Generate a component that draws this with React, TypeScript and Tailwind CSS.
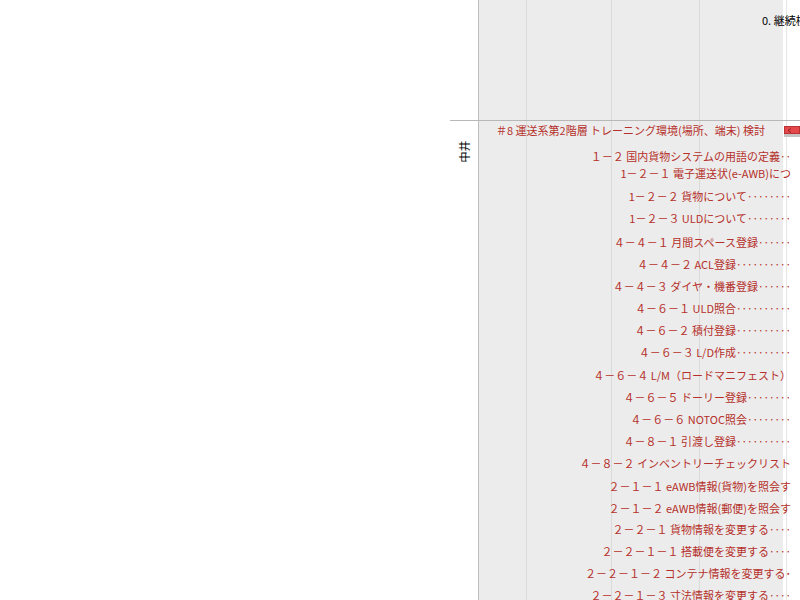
import React from 'react'

type Row = { label: string; gap: string }

const rows: Row[] = [
  { label: '１－２ 国内貨物システムの用語の定義‥', gap: 'mt-[12px]' },
  { label: '1－２－１ 電子運送状(e-AWB)につ', gap: 'mt-[3px]' },
  { label: '1－２－２ 貨物について‥‥‥‥', gap: 'mt-[9px]' },
  { label: '1－２－３ ULDについて‥‥‥‥', gap: 'mt-[8px]' },
  { label: '４－４－１ 月間スペース登録‥‥‥', gap: 'mt-[10px]' },
  { label: '４－４－２ ACL登録‥‥‥‥‥', gap: 'mt-[8px]' },
  { label: '４－４－３ ダイヤ・機番登録‥‥‥', gap: 'mt-[8px]' },
  { label: '４－６－１ ULD照合‥‥‥‥‥', gap: 'mt-[8px]' },
  { label: '４－６－２ 積付登録‥‥‥‥‥', gap: 'mt-[8px]' },
  { label: '４－６－３ L/D作成‥‥‥‥‥', gap: 'mt-[8px]' },
  { label: '４－６－４ L/M（ロードマニフェスト）', gap: 'mt-[9px]' },
  { label: '４－６－５ ドーリー登録‥‥‥‥', gap: 'mt-[8px]' },
  { label: '４－６－６ NOTOC照会‥‥‥‥', gap: 'mt-[8px]' },
  { label: '４－８－１ 引渡し登録‥‥‥‥‥', gap: 'mt-[8px]' },
  { label: '４－８－２ インベントリーチェックリスト', gap: 'mt-[8px]' },
  { label: '２－１－１ eAWB情報(貨物)を照会す', gap: 'mt-[9px]' },
  { label: '２－１－２ eAWB情報(郵便)を照会す', gap: 'mt-[8px]' },
  { label: '２－２－１ 貨物情報を変更する‥‥', gap: 'mt-[7px]' },
  { label: '２－２－１－１ 搭載便を変更する‥‥', gap: 'mt-[8px]' },
  { label: '２－２－１－２ コンテナ情報を変更する･', gap: 'mt-[8px]' },
  { label: '２－２－１－３ 寸法情報を変更する‥‥', gap: 'mt-[8px]' },
]

export default function App() {
  return (
    <div className="w-[800px] h-[600px] overflow-hidden bg-white flex font-['Noto_Sans_CJK_JP',sans-serif] text-[11px]">
      <div className="w-[450px] shrink-0" />
      <div className="w-[350px] shrink-0 relative flex flex-col">
        {/* chart backdrop */}
        <div className="absolute inset-y-0 left-[28px] right-0 flex">
          <div className="w-[49px] bg-[#ececec] border-l border-r border-[#bcbcbc] border-r-[#dadada]" />
          <div className="w-[85px] bg-[#ececec] border-r border-[#dadada]" />
          <div className="w-[88px] bg-[#ececec] border-r border-[#dadada]" />
          <div className="w-[83px] bg-[#ececec]" />
          <div className="w-[4px] border-r border-[#e6e6e6]" />
          <div className="flex-1" />
        </div>

        <div className="relative h-[121px] shrink-0 border-b border-[#b8b8b8]">
          <div className="pl-[312px] pt-[12px] text-black whitespace-nowrap">0. 継続検討事項</div>
        </div>

        <div className="relative flex flex-1 min-h-0">
          <div className="w-[28px] shrink-0 flex justify-center pt-[25px]">
            <span className="inline-block -rotate-90 text-black leading-none h-[11px] whitespace-nowrap">中井</span>
          </div>
          <div className="flex-1 flex flex-col text-[#b5302a] overflow-hidden">
            <div className="mt-[2px] h-[14px] leading-[14px] flex justify-end items-center whitespace-nowrap">
              <span>＃8 運送系第2階層 トレーニング環境(場所、端末) 検討</span>
              <div className="ml-[19px] w-[16px] shrink-0 h-[8px] bg-[#e6474a] border border-[#b83234] shadow-[0_3px_0_#c4c4c4] flex items-center pl-[2px]">
                <svg width="5" height="5" viewBox="0 0 5 5">
                  <path d="M4 0.5 L1 2.5 L4 4.5" stroke="#7a1a1a" strokeWidth="0.8" fill="none" />
                </svg>
              </div>
            </div>
            {rows.map((r, i) => (
              <div
                key={i}
                className={`${r.gap} h-[14px] leading-[14px] pr-[9px] text-right whitespace-nowrap overflow-hidden shrink-0`}
              >
                {r.label}
              </div>
            ))}
          </div>
        </div>
      </div>
    </div>
  )
}
